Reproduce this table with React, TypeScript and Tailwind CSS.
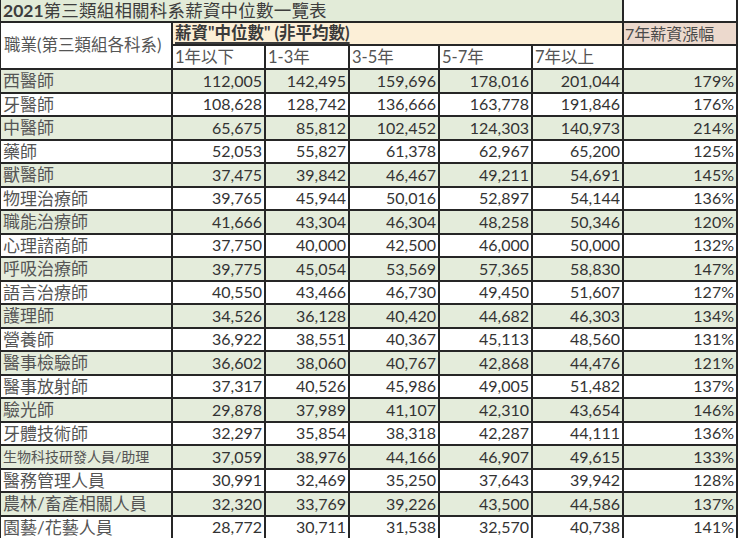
import React from "react";

const rows: [string, string, string, string, string, string, string][] = [
  ["西醫師", "112,005", "142,495", "159,696", "178,016", "201,044", "179%"],
  ["牙醫師", "108,628", "128,742", "136,666", "163,778", "191,846", "176%"],
  ["中醫師", "65,675", "85,812", "102,452", "124,303", "140,973", "214%"],
  ["藥師", "52,053", "55,827", "61,378", "62,967", "65,200", "125%"],
  ["獸醫師", "37,475", "39,842", "46,467", "49,211", "54,691", "145%"],
  ["物理治療師", "39,765", "45,944", "50,016", "52,897", "54,144", "136%"],
  ["職能治療師", "41,666", "43,304", "46,304", "48,258", "50,346", "120%"],
  ["心理諮商師", "37,750", "40,000", "42,500", "46,000", "50,000", "132%"],
  ["呼吸治療師", "39,775", "45,054", "53,569", "57,365", "58,830", "147%"],
  ["語言治療師", "40,550", "43,466", "46,730", "49,450", "51,607", "127%"],
  ["護理師", "34,526", "36,128", "40,420", "44,682", "46,303", "134%"],
  ["營養師", "36,922", "38,551", "40,367", "45,113", "48,560", "131%"],
  ["醫事檢驗師", "36,602", "38,060", "40,767", "42,868", "44,476", "121%"],
  ["醫事放射師", "37,317", "40,526", "45,986", "49,005", "51,482", "137%"],
  ["驗光師", "29,878", "37,989", "41,107", "42,310", "43,654", "146%"],
  ["牙體技術師", "32,297", "35,854", "38,318", "42,287", "44,111", "136%"],
  ["生物科技研發人員/助理", "37,059", "38,976", "44,166", "46,907", "49,615", "133%"],
  ["醫務管理人員", "30,991", "32,469", "35,250", "37,643", "39,942", "128%"],
  ["農林/畜產相關人員", "32,320", "33,769", "39,226", "43,500", "44,586", "137%"],
  ["園藝/花藝人員", "28,772", "30,711", "31,538", "32,570", "40,738", "141%"],
];

const years = ["1年以下", "1-3年", "3-5年", "5-7年", "7年以上"];

export default function App() {
  return (
    <div
      className="w-[740px] h-[539px] overflow-hidden bg-white"
      style={{ fontFamily: "Lato, 'Noto Sans CJK TC', sans-serif" }}
    >
      <div className="w-[738px] bg-[#262626] pl-[1px] pr-[2px]">
        <div className="grid grid-cols-[170px_91px_82px_88px_91px_89px_112px] gap-[2px] text-[#3a3a3a]">
          {/* Title row */}
          <div className="col-span-6 h-[21px] bg-[#e2ebd8] flex items-center pl-[2px] text-[17.5px] leading-none font-bold text-[#3d3d3d] whitespace-nowrap">
            2021<span className="font-normal tracking-[0.2px]">第三類組相關科系薪資中位數一覽表</span>
          </div>
          <div className="h-[21px] bg-white" />

          {/* Header rows */}
          <div className="row-span-2 bg-white flex items-center pl-[3px] text-[16.5px] text-[#555] whitespace-nowrap">
            職業(第三類組各科系)
          </div>
          <div className="col-span-5 h-[21px] bg-[#fcefd7] flex items-center pl-[2px] text-[16.5px] leading-none font-bold text-[#3a3a3a] whitespace-nowrap">
            <span className="underline underline-offset-[3px] decoration-[1.5px]">薪資"中位數" (非平均數)</span>
          </div>
          <div className="h-[21px] bg-[#ecd9cd] flex items-center pl-[1px] text-[16px] leading-none text-[#4a4a4a] whitespace-nowrap">
            7年薪資漲幅
          </div>
          {years.map((y) => (
            <div
              key={y}
              className="h-[22px] bg-white flex items-center pl-[2px] text-[16.5px] leading-none text-[#555] whitespace-nowrap"
            >
              {y}
            </div>
          ))}
          <div className="h-[22px] bg-white" />

          {/* Data rows */}
          {rows.map((r, i) => {
            const bg = i % 2 === 0 ? "bg-[#e4ecdb]" : "bg-white";
            return (
              <React.Fragment key={r[0]}>
                <div
                  className={`${bg} h-[21.5px] flex items-center pl-[2px] leading-none text-[#555] whitespace-nowrap ${
                    r[0].length > 10 ? "text-[14px]" : "text-[17px]"
                  }`}
                >
                  {r[0]}
                </div>
                {r.slice(1).map((v, j) => (
                  <div
                    key={j}
                    className={`${bg} h-[21.5px] flex items-center justify-end pr-[2px] text-[16px] leading-none text-[#333]`}
                  >
                    {v}
                  </div>
                ))}
              </React.Fragment>
            );
          })}
        </div>
      </div>
    </div>
  );
}
